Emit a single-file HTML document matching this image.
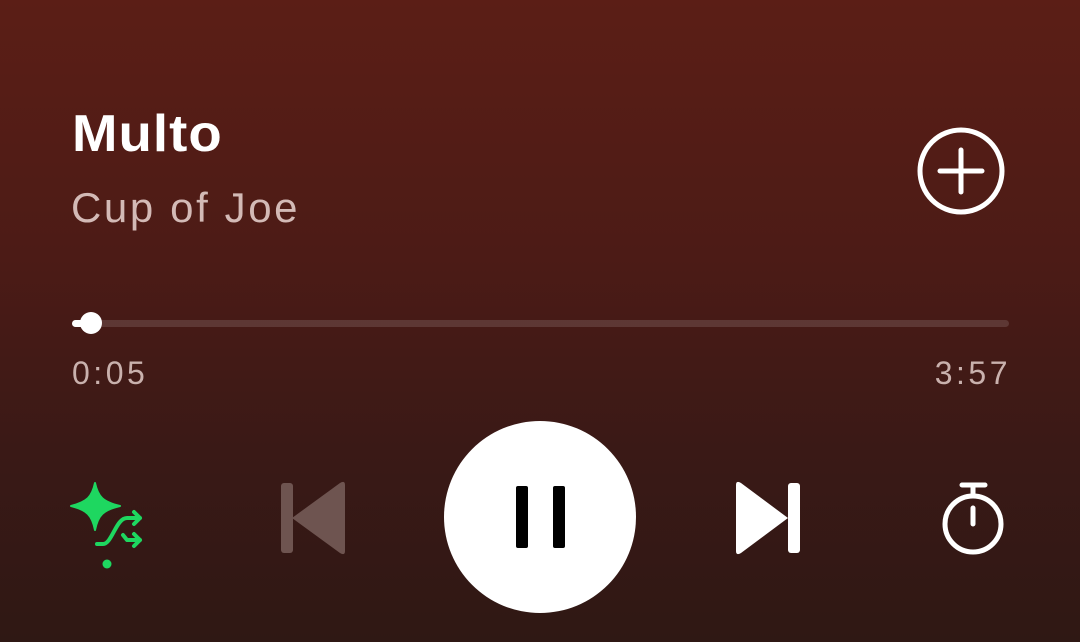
<!DOCTYPE html>
<html><head><meta charset="utf-8"><style>
html,body{margin:0;padding:0}
body{width:1080px;height:642px;overflow:hidden;position:relative;background:linear-gradient(180deg,#5b1e16 0%,#4c1b16 40%,#3a1916 70%,#2f1814 100%);font-family:"Liberation Sans",sans-serif}
.t{position:absolute;left:72px;top:104px;font-size:52px;font-weight:bold;color:#fff;letter-spacing:1px;transform:scaleX(1.05);transform-origin:left}
.s{position:absolute;left:71px;top:184px;font-size:42px;color:#d3bab6;letter-spacing:2.6px}
.tm{position:absolute;top:355px;font-size:32px;color:#c9b1ad;letter-spacing:3.5px}
</style></head><body>
<div class="t">Multo</div>
<div class="s">Cup of Joe</div>
<svg width="1080" height="642" style="position:absolute;left:0;top:0">
<circle cx="961" cy="171" r="41" fill="none" stroke="#fff" stroke-width="5"/>
<path d="M961 150v42M940 171h42" stroke="#fff" stroke-width="5" stroke-linecap="round"/>
<rect x="72" y="320" width="937" height="7" rx="3.5" fill="rgba(255,255,255,0.13)"/>
<rect x="72" y="320" width="20" height="7" rx="3.5" fill="#fff"/>
<circle cx="91" cy="323" r="11" fill="#fff"/>
<path d="M95 483 C98 497 103 502 120 506 C103 510 98 515 95 530 C92 515 87 510 71 506 C87 502 92 497 95 483Z" fill="#1ed760" stroke="#1ed760" stroke-width="2" stroke-linejoin="round"/>
<path d="M97 544 L103 544 C112 544 116 518 127 518 L140 518 M134 512l6 6-6 6 M123 535 L127 540 L140 540 M134 534l6 6-6 6" fill="none" stroke="#1ed760" stroke-width="4" stroke-linecap="round" stroke-linejoin="round"/>
<circle cx="107" cy="564" r="4.5" fill="#1ed760"/>
<rect x="281" y="483" width="12" height="70" rx="3" fill="#6e5450"/>
<path d="M345 485 L345 551 Q345 556 340 553 L292 518 L340 483 Q345 480 345 485Z" fill="#6e5450"/>
<circle cx="540" cy="517" r="96" fill="#fff"/>
<rect x="516" y="486" width="12" height="62" rx="2" fill="#000"/>
<rect x="553" y="486" width="12" height="62" rx="2" fill="#000"/>
<path d="M736 485 L736 551 Q736 556 741 553 L788 518 L741 483 Q736 480 736 485Z" fill="#fff"/>
<rect x="788" y="483" width="12" height="70" rx="3" fill="#fff"/>
<circle cx="973" cy="524" r="28" fill="none" stroke="#fff" stroke-width="5"/>
<path d="M962 485h23M973 485v10M973 508v16" stroke="#fff" stroke-width="5" stroke-linecap="round"/>
</svg>
<div class="tm" style="left:72px">0:05</div>
<div class="tm" style="right:69px">3:57</div>
</body></html>
